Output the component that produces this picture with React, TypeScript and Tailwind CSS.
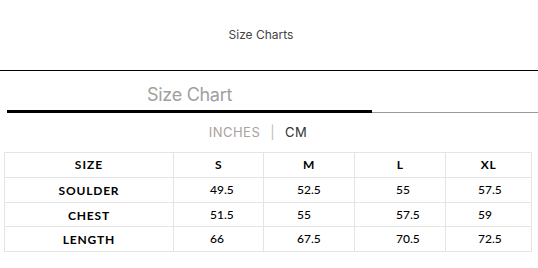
const sizes = ["S", "M", "L", "XL"];

const rows = [
  { label: "SOULDER", values: ["49.5", "52.5", "55", "57.5"], h: "h-[25px]" },
  { label: "CHEST", values: ["51.5", "55", "57.5", "59"], h: "h-[24px]" },
  { label: "LENGTH", values: ["66", "67.5", "70.5", "72.5"], h: "h-[25px]" },
];

// values sit left-ish in each column, not centred
const valuePad = ["pl-[36px]", "pl-[33px]", "pl-[41px]", "pl-[32px]"];

export default function App() {
  return (
    <div className="h-[268px] w-[538px] overflow-hidden bg-white font-['Lato','Noto_Sans',sans-serif]">
      <div className="flex h-[71px] items-center justify-center border-b border-black pr-[16px]">
        <p className="font-['Inter',sans-serif] text-[12px] text-[#444]">
          Size Charts
        </p>
      </div>

      <div className="ml-[7px] mt-[11px] flex border-b border-[#999]">
        <div className="-mb-px w-[365px] border-b-[3px] border-black pb-[2px] text-center font-['Inter',sans-serif] text-[18px] leading-[26px] tracking-[-0.3px] text-[#a0a0a0]">
          Size Chart
        </div>
      </div>

      <div className="mt-[11px] flex items-center justify-center gap-[10px] pr-[22px] font-['Inter',sans-serif] text-[13px] leading-[16px] tracking-[0.5px]">
        <span className="text-[#a9a29c]">INCHES</span>
        <span className="text-[#bbb]">|</span>
        <span className="text-[#333]">CM</span>
      </div>

      <table className="ml-[4px] mt-[12px] w-[527px] table-fixed border-collapse text-[12px] text-black">
        <colgroup>
          <col className="w-[169px]" />
          <col className="w-[90px]" />
          <col className="w-[91px]" />
          <col className="w-[91px]" />
          <col className="w-[86px]" />
        </colgroup>
        <thead>
          <tr className="h-[25px]">
            <th className="border border-[#e4e4e4] p-0 text-center font-bold tracking-[1px]">
              SIZE
            </th>
            {sizes.map((s) => (
              <th
                key={s}
                className="border border-[#e4e4e4] p-0 text-center font-bold tracking-[0.5px]"
              >
                {s}
              </th>
            ))}
          </tr>
        </thead>
        <tbody>
          {rows.map((row) => (
            <tr key={row.label} className={row.h}>
              <td className="border border-[#e4e4e4] p-0 pt-[2px] text-center font-bold tracking-[0.8px]">
                {row.label}
              </td>
              {row.values.map((v, i) => (
                <td
                  key={i}
                  className={`border border-[#e4e4e4] p-0 text-left font-medium ${valuePad[i]}`}
                >
                  {v}
                </td>
              ))}
            </tr>
          ))}
        </tbody>
      </table>
    </div>
  );
}
